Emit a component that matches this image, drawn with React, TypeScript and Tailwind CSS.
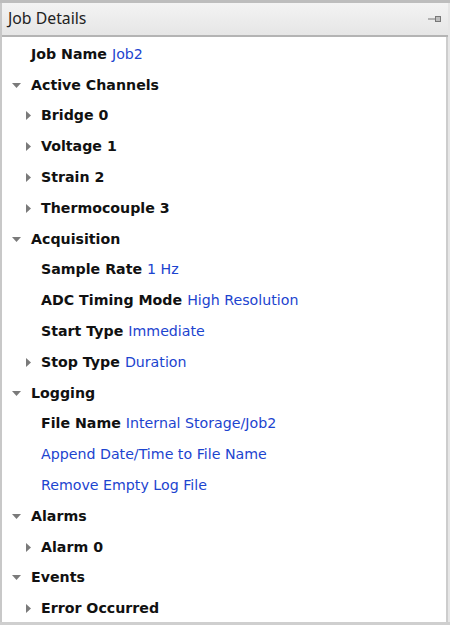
import React from "react";

type Node = {
  label?: string;
  value?: string;
  link?: string;
  arrow?: "down" | "right";
  level: 0 | 1;
};

const rows: Node[] = [
  { label: "Job Name", value: "Job2", level: 0 },
  { label: "Active Channels", arrow: "down", level: 0 },
  { label: "Bridge 0", arrow: "right", level: 1 },
  { label: "Voltage 1", arrow: "right", level: 1 },
  { label: "Strain 2", arrow: "right", level: 1 },
  { label: "Thermocouple 3", arrow: "right", level: 1 },
  { label: "Acquisition", arrow: "down", level: 0 },
  { label: "Sample Rate", value: "1 Hz", level: 1 },
  { label: "ADC Timing Mode", value: "High Resolution", level: 1 },
  { label: "Start Type", value: "Immediate", level: 1 },
  { label: "Stop Type", value: "Duration", arrow: "right", level: 1 },
  { label: "Logging", arrow: "down", level: 0 },
  { label: "File Name", value: "Internal Storage/Job2", level: 1 },
  { link: "Append Date/Time to File Name", level: 1 },
  { link: "Remove Empty Log File", level: 1 },
  { label: "Alarms", arrow: "down", level: 0 },
  { label: "Alarm 0", arrow: "right", level: 1 },
  { label: "Events", arrow: "down", level: 0 },
  { label: "Error Occurred", arrow: "right", level: 1 },
];

function Arrow({ dir }: { dir: "down" | "right" }) {
  if (dir === "down") {
    return (
      <svg width="9" height="5" viewBox="0 0 9 5" className="block">
        <path d="M0 0h9L4.5 5z" fill="#7a7a7a" />
      </svg>
    );
  }
  return (
    <svg width="5" height="9" viewBox="0 0 5 9" className="block">
      <path d="M0 0l5 4.5L0 9z" fill="#7a7a7a" />
    </svg>
  );
}

function PinIcon() {
  return (
    <svg width="14" height="8" viewBox="0 0 14 8" className="block">
      <path d="M0 4h7" stroke="#777" strokeWidth="1" />
      <rect x="7.5" y="1.5" width="5" height="5" fill="#bdbdbd" stroke="#777" strokeWidth="1" />
    </svg>
  );
}

function TreeRow({ row }: { row: Node }) {
  const indent = row.level === 0 ? "pl-[10px]" : "pl-[24px]";
  const slot = row.level === 0 ? "w-[19px]" : "w-[15px]";
  return (
    <div className={`flex items-center h-[30.8px] ${indent} whitespace-nowrap`}>
      <div className={`${slot} flex items-center shrink-0`}>
        {row.arrow && <Arrow dir={row.arrow} />}
      </div>
      {row.label && <span className="font-bold text-[#111]">{row.label}</span>}
      {row.value && <span className="text-[#1c44cf] ml-[5px]">{row.value}</span>}
      {row.link && <span className="text-[#1c44cf]">{row.link}</span>}
    </div>
  );
}

export default function App() {
  return (
    <div className="w-[450px] h-[625px] bg-[#e6e6e6] overflow-hidden">
      <div className="h-[3px] bg-[#bdbdbd]" />
      <div className="flex flex-col w-[448px] h-[619px] border-l-2 border-[#c8c8c8]">
        <div className="h-[34px] flex items-center justify-between pl-[6px] pr-[6px] bg-gradient-to-b from-[#f3f3f3] to-[#e6e6e6] border-b-2 border-[#b4b4b4]">
          <span className="text-[15.8px] text-[#222] font-['Noto_Sans',sans-serif]">Job Details</span>
          <PinIcon />
        </div>
        <div className="flex-1 bg-white border-r-2 border-[#cdcdcd] pt-[2px] text-[14.2px] font-['DejaVu_Sans',Verdana,sans-serif] overflow-hidden">
          {rows.map((r, i) => (
            <TreeRow key={i} row={r} />
          ))}
        </div>
      </div>
      <div className="h-[3px] bg-[#cfcfcf]" />
    </div>
  );
}
